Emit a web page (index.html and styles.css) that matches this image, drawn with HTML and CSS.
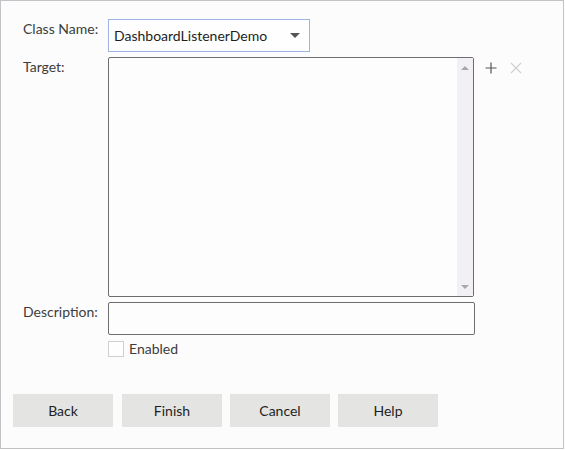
FILE: index.html
```html
<!DOCTYPE html>
<html lang="en">
<head>
  <meta charset="UTF-8">
  <title>Listener</title>
  <link rel="stylesheet" href="styles.css">
</head>
<body>
  <div class="dialog">
    <div class="form">
      <label class="label" for="className">Class Name:</label>
      <div class="select" id="className">
        <span>DashboardListenerDemo</span>
        <span class="caret"></span>
      </div>
      <div></div>

      <label class="label">Target:</label>
      <div class="list">
        <div class="list-body"></div>
        <div class="scrollbar">
          <span class="arrow-up"></span>
          <span class="arrow-down"></span>
        </div>
      </div>
      <div class="tools">
        <svg width="12" height="12" viewBox="0 0 12 12">
          <path d="M6 0.5v11M0.5 6h11" stroke="#555" stroke-width="1.2" fill="none"/>
        </svg>
        <svg width="12" height="12" viewBox="0 0 12 12">
          <path d="M1 1l10 10M11 1L1 11" stroke="#cfcfcf" stroke-width="1.1" fill="none"/>
        </svg>
      </div>

      <label class="label" for="desc">Description:</label>
      <input class="text" type="text" id="desc">
      <div></div>

      <div></div>
      <label class="check">
        <span class="box"></span>
        Enabled
      </label>
      <div></div>
    </div>

    <div class="buttons">
      <button type="button">Back</button>
      <button type="button" class="wide-gap">Finish</button>
      <button type="button">Cancel</button>
      <button type="button">Help</button>
    </div>
  </div>
</body>
</html>
```

FILE: styles.css
```css
* {
  box-sizing: border-box;
}
body {
  margin: 0;
  font-family: Lato, "Open Sans", sans-serif;
  font-size: 14px;
  color: #333;
}
.dialog {
  width: 564px;
  height: 449px;
  border: 1px solid #c3c2c6;
  background: #fbfcfb;
}
.form {
  display: grid;
  grid-template-columns: 85px 366px 1fr;
  row-gap: 5px;
  padding: 18px 0 0 22px;
}
.label {
  padding-top: 1px;
  color: #3c3c3c;
}
.select {
  width: 202px;
  height: 33px;
  border: 1px solid #9fb4e2;
  display: flex;
  align-items: center;
  justify-content: space-between;
  padding: 0 9px 0 5px;
  color: #1e1e1e;
  background: #fdfefd;
}
.caret {
  width: 0;
  height: 0;
  border-left: 5px solid transparent;
  border-right: 5px solid transparent;
  border-top: 5px solid #555;
}
.list {
  height: 240px;
  border: 1px solid #6e6e6e;
  border-radius: 2px;
  display: flex;
  background: #fcfdfc;
}
.list-body {
  flex: 1;
}
.scrollbar {
  width: 16px;
  background: #f2f0f4;
  display: flex;
  flex-direction: column;
  justify-content: space-between;
  align-items: center;
  padding: 8px 0 7px;
}
.arrow-up {
  border-left: 4px solid transparent;
  border-right: 4px solid transparent;
  border-bottom: 4px solid #a8a8ac;
}
.arrow-down {
  border-left: 4px solid transparent;
  border-right: 4px solid transparent;
  border-top: 4px solid #a8a8ac;
}
.tools {
  display: flex;
  gap: 13px;
  padding: 5px 0 0 11px;
}
.text {
  width: 367px;
  height: 33px;
  border: 1px solid #6e6e6e;
  border-radius: 2px;
  background: #fcfdfc;
  margin: 0;
}
.check {
  display: flex;
  align-items: center;
  gap: 5px;
  color: #3c3c3c;
}
.box {
  width: 16px;
  height: 16px;
  border: 1px solid #cfcfcf;
  background: #fdfefd;
}
.buttons {
  display: flex;
  gap: 8px;
  padding: 37px 0 0 12px;
}
.buttons .wide-gap {
  margin-left: 1px;
}
button {
  width: 100px;
  height: 33px;
  border: none;
  background: #e4e5e3;
  font-family: Lato, "Open Sans", sans-serif;
  font-size: 14px;
  color: #1e1e1e;
  padding: 0;
}
```
